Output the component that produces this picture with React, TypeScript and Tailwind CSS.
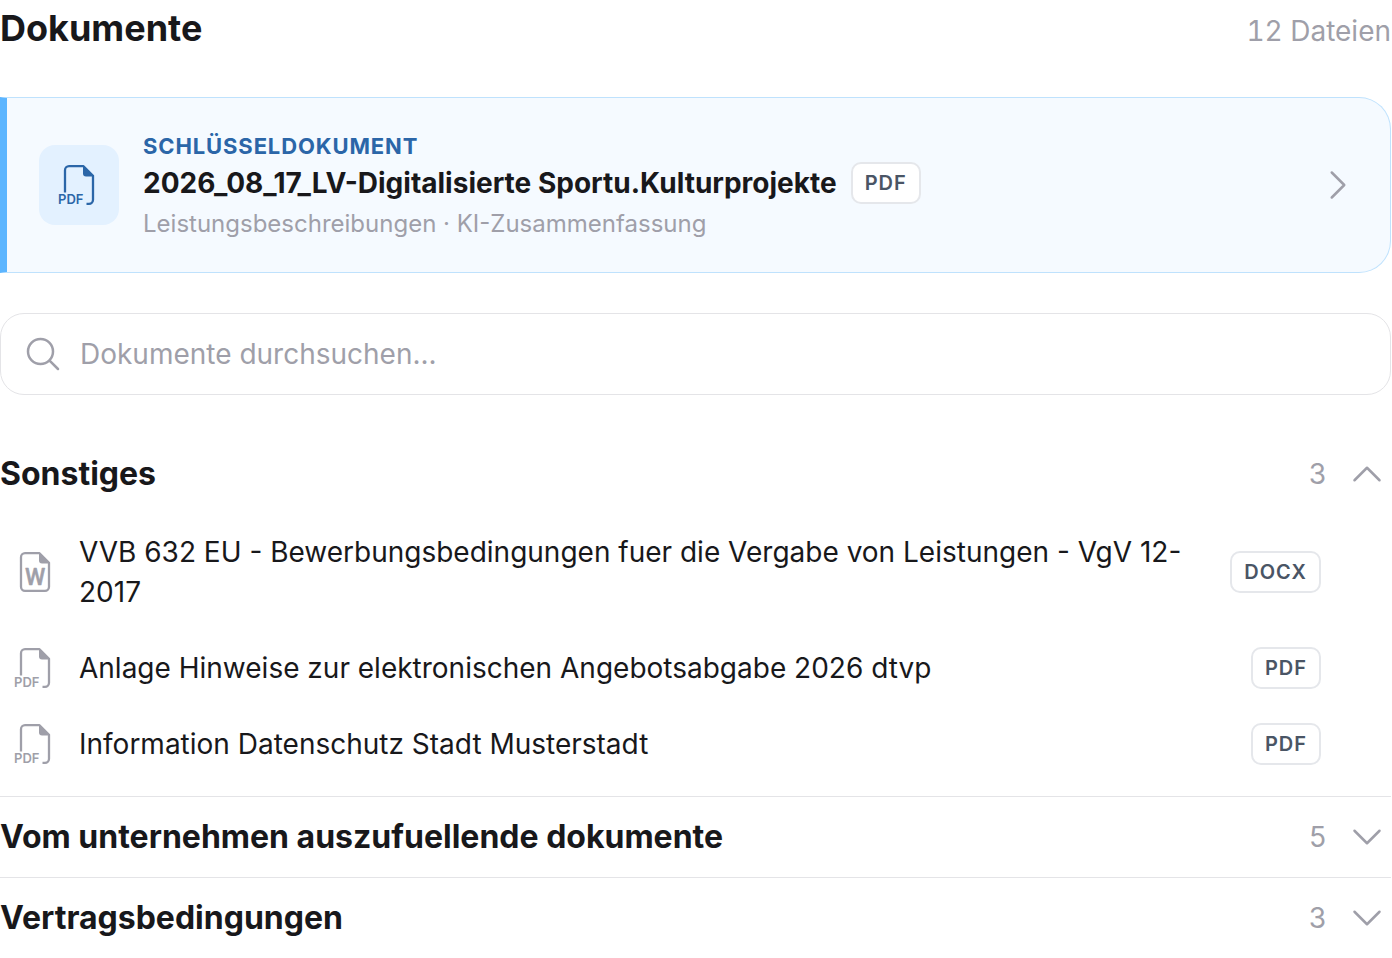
import { useState } from "react";
import {
  HiOutlineChevronDown,
  HiOutlineChevronRight,
  HiOutlineChevronUp,
  HiOutlineMagnifyingGlass,
} from "react-icons/hi2";

type FileType = "PDF" | "DOCX";

const sections: {
  title: string;
  count: number;
  files: { name: string; type: FileType }[];
}[] = [
  {
    title: "Sonstiges",
    count: 3,
    files: [
      {
        name: "VVB 632 EU - Bewerbungsbedingungen fuer die Vergabe von Leistungen - VgV 12-2017",
        type: "DOCX",
      },
      {
        name: "Anlage Hinweise zur elektronischen Angebotsabgabe 2026 dtvp",
        type: "PDF",
      },
      { name: "Information Datenschutz Stadt Musterstadt", type: "PDF" },
    ],
  },
  { title: "Vom unternehmen auszufuellende dokumente", count: 5, files: [] },
  { title: "Vertragsbedingungen", count: 3, files: [] },
];

function FileIcon({ type }: { type: FileType }) {
  return (
    <svg
      width="42"
      height="48"
      viewBox="0 -2 42 48"
      fill="none"
      stroke="currentColor"
      strokeWidth="2.3"
      strokeLinejoin="round"
      className="-my-1 block shrink-0 overflow-visible"
      aria-hidden="true"
    >
      {type === "PDF" ? (
        <path d="M7 29.5V7.2a4 4 0 0 1 4-4h14.5L35 12.7V36.8a4 4 0 0 1-4 4h-2.5" />
      ) : (
        <path d="M11 3.2h14.5L35 12.7V36.8a4 4 0 0 1-4 4H11a4 4 0 0 1-4-4V7.2a4 4 0 0 1 4-4Z" />
      )}
      <path d="M25 3v7.5a3 3 0 0 0 3 3h7.5Z" fill="currentColor" stroke="none" />
      {type === "PDF" ? (
        <text
          x="0"
          y="41"
          fill="currentColor"
          stroke="none"
          className="font-['Inter',sans-serif] text-[13px] font-semibold"
        >
          PDF
        </text>
      ) : (
        <text
          x="21"
          y="35"
          textAnchor="middle"
          fill="currentColor"
          strokeWidth="0.5"
          className="font-['Roboto',sans-serif] text-[23px] font-medium"
        >
          W
        </text>
      )}
    </svg>
  );
}

function Badge({ type }: { type: FileType }) {
  return (
    <span className="shrink-0 rounded-[10px] border-2 border-gray-200 bg-white px-3 text-xl leading-[38px] font-semibold tracking-wider text-gray-600">
      {type}
    </span>
  );
}

export default function App() {
  const [open, setOpen] = useState("Sonstiges");

  return (
    <main className="bg-white pr-px font-['Inter',sans-serif] text-zinc-900">
      <header className="flex items-baseline justify-between">
        <h1 className="text-4xl leading-[56px] font-bold">Dokumente</h1>
        <span className="text-[28px] leading-10 text-zinc-400 tabular-nums">12 Dateien</span>
      </header>

      <a
        href="#schluesseldokument"
        className="mt-[41px] flex items-center gap-6 rounded-r-[32px] border border-l-[7px] border-[#bfe2fd] border-l-[#5cb5ff] bg-[#f5faff] px-8 py-8"
      >
        <span className="flex size-20 shrink-0 items-center justify-center rounded-2xl bg-[#e3f1ff] text-[#2b66a8]">
          <FileIcon type="PDF" />
        </span>
        <span className="flex min-w-0 flex-1 flex-col">
          <span className="text-[22px] leading-8 font-bold tracking-[0.04em] text-[#2b66a8]">
            SCHLÜSSELDOKUMENT
          </span>
          <span className="flex items-center gap-3.5 text-[28px] font-bold">
            2026_08_17_LV-Digitalisierte Sportu.Kulturprojekte
            <Badge type="PDF" />
          </span>
          <span className="mt-1 text-2xl leading-8 text-zinc-400">
            Leistungsbeschreibungen · KI-Zusammenfassung
          </span>
        </span>
        <HiOutlineChevronRight className="size-10 shrink-0 text-zinc-400" />
      </a>

      <label className="mt-10 flex h-[82px] items-center gap-[17px] rounded-3xl border border-zinc-200 px-[22px]">
        <HiOutlineMagnifyingGlass className="size-10 shrink-0 text-zinc-400" />
        <input
          type="search"
          aria-label="Dokumente durchsuchen"
          placeholder="Dokumente durchsuchen..."
          className="min-w-0 flex-1 bg-transparent text-[28px] outline-none placeholder:text-zinc-400"
        />
      </label>

      <div className="mt-[39px] divide-y divide-zinc-200">
        {sections.map((section) => {
          const isOpen = open === section.title;
          return (
            <section key={section.title}>
              <button
                type="button"
                aria-expanded={isOpen}
                onClick={() => setOpen(isOpen ? "" : section.title)}
                className="flex h-20 w-full items-center pr-1 text-left"
              >
                <span className="flex-1 text-[32px] font-bold">{section.title}</span>
                <span className="mr-5 text-[28px] text-zinc-400 tabular-nums">{section.count}</span>
                {isOpen ? (
                  <HiOutlineChevronUp className="size-10 text-zinc-400" />
                ) : (
                  <HiOutlineChevronDown className="size-10 text-zinc-400" />
                )}
              </button>
              {isOpen && (
                <ul className="pb-3.5">
                  {section.files.map((file) => (
                    <li key={file.name}>
                      <a href="#datei" className="flex items-center gap-[23px] py-[17px] pr-[70px] pl-3.5">
                        <span className="text-zinc-400">
                          <FileIcon type={file.type} />
                        </span>
                        <span className="flex-1 py-px text-[28px] leading-10">{file.name}</span>
                        <Badge type={file.type} />
                      </a>
                    </li>
                  ))}
                </ul>
              )}
            </section>
          );
        })}
      </div>
    </main>
  );
}
